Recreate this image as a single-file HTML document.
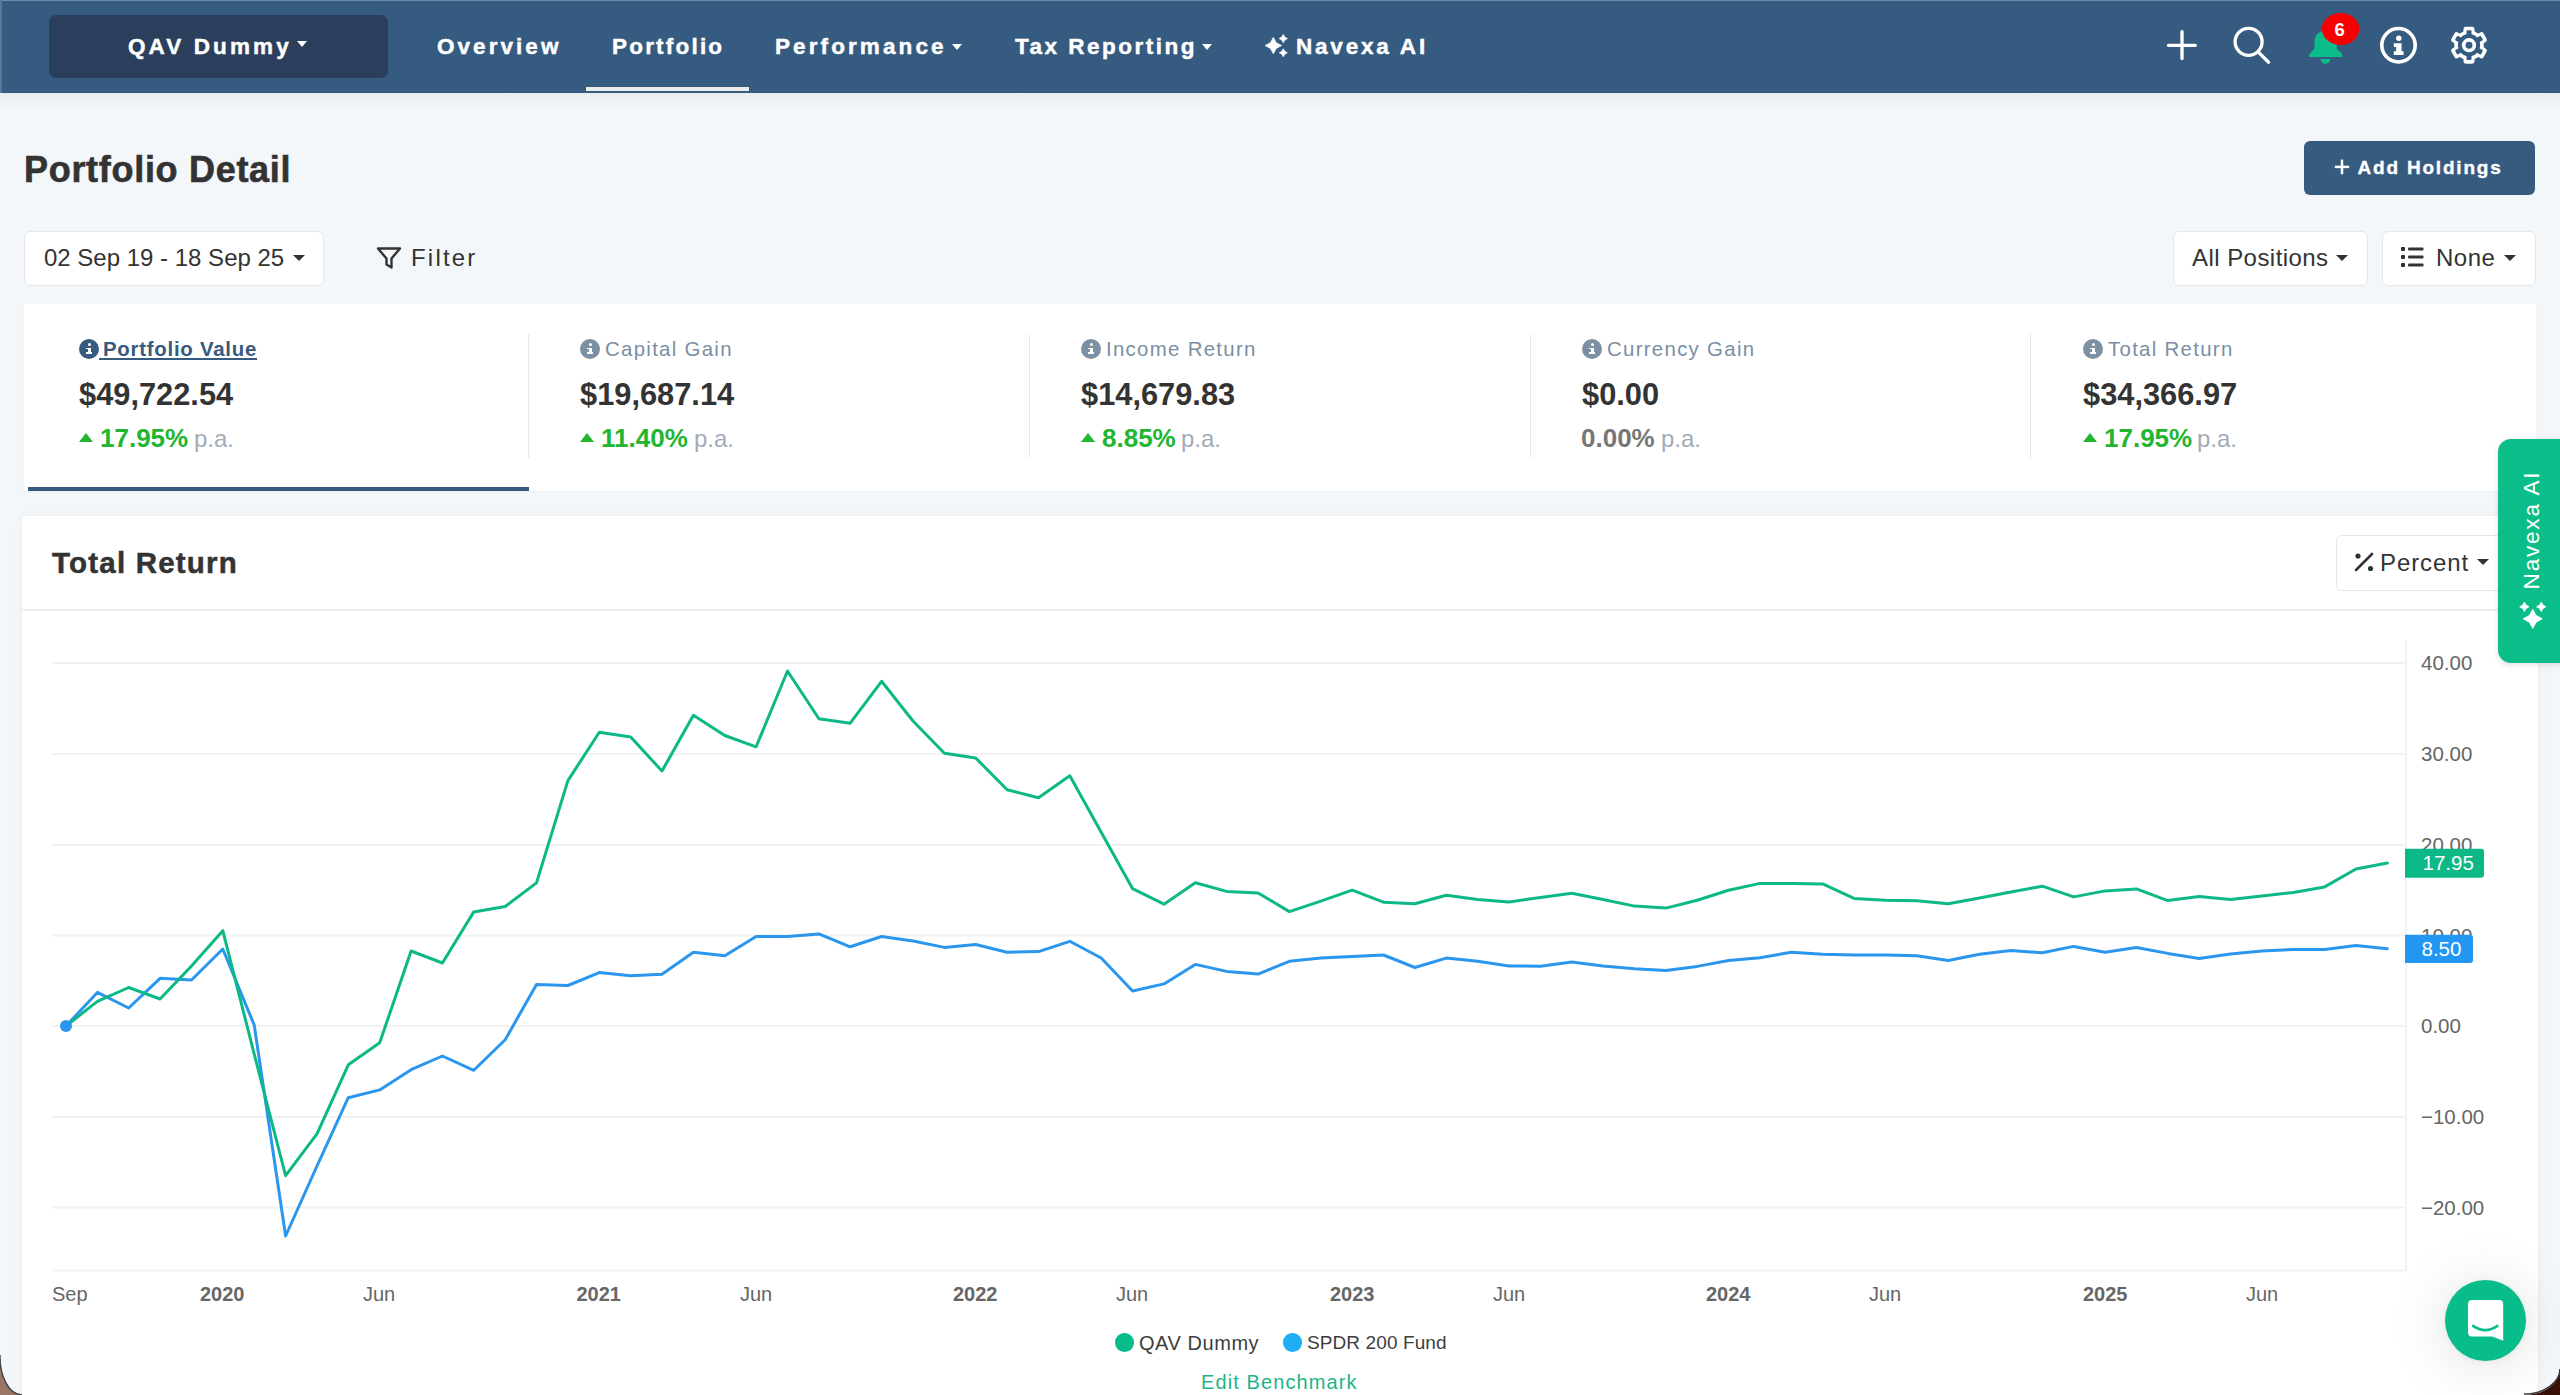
<!DOCTYPE html>
<html><head><meta charset="utf-8">
<style>
html,body{margin:0;padding:0;width:2560px;height:1395px;overflow:hidden;background:#f4f7fa;font-family:"Liberation Sans",sans-serif;}
.a{position:absolute;white-space:nowrap;line-height:1;}
#nav{position:absolute;left:0;top:0;width:2560px;height:93px;background:#365b80;}
.nv{position:absolute;color:#fff;font-weight:bold;font-size:22.5px;line-height:1;white-space:nowrap;-webkit-text-stroke:0.45px #fff;}
.card{position:absolute;background:#fff;}
.lbl{position:absolute;font-size:20.4px;line-height:1;white-space:nowrap;color:#7b8ea3;letter-spacing:1.3px;}
.val{position:absolute;font-size:30.8px;font-weight:bold;line-height:1;white-space:nowrap;color:#333;}
.pct{position:absolute;font-size:26px;font-weight:bold;line-height:1;white-space:nowrap;color:#22b530;}
.pa{position:absolute;font-size:24px;line-height:1;white-space:nowrap;color:#a3abb8;}
.ico{position:absolute;width:20px;height:20px;border-radius:50%;background:#7d8fa3;}
.ico i{position:absolute;left:8.5px;top:4px;width:3px;height:3px;background:#fff;border-radius:50%;}
.ico b{position:absolute;left:8.5px;top:8.5px;width:3px;height:6px;background:#fff;}
.ico u{position:absolute;left:7px;top:13px;width:6px;height:2px;background:#fff;}
.ico s{position:absolute;left:7px;top:8.5px;width:2px;height:1.5px;background:#fff;}
.tri{position:absolute;width:0;height:0;border-left:7px solid transparent;border-right:7px solid transparent;border-bottom:9px solid #22b530;}
.sep{position:absolute;top:334px;width:1px;height:124px;background:#e6e9ed;}
.btn{position:absolute;background:#fff;border:1px solid #e5e7ea;border-radius:6px;box-sizing:border-box;}
.txt{position:absolute;font-size:24px;line-height:1;white-space:nowrap;color:#333;}
.caret{position:absolute;width:0;height:0;border-left:6px solid transparent;border-right:6px solid transparent;border-top:6px solid #333;}
</style></head>
<body>
<!-- window edges -->
<div class="a" style="left:0;top:93px;width:2560px;height:16px;background:linear-gradient(#e9ecef,rgba(244,247,250,0));"></div>
<div id="nav"></div>
<div class="a" style="left:0;top:0;width:2560px;height:1px;background:#7089a4;"></div>
<div class="a" style="left:0;top:0;width:2px;height:93px;background:#5a7795;"></div>

<!-- brand -->
<div class="a" style="left:49px;top:15px;width:339px;height:63px;background:#2b3f5c;border-radius:7px;"></div>
<div class="nv" style="left:128px;top:36px;letter-spacing:3.1px;">QAV Dummy</div>
<div class="caret" style="left:297px;top:41px;border-left-width:5.8px;border-right-width:5.8px;border-top:6.5px solid #fff;"></div>

<div class="nv" style="left:437px;top:36px;letter-spacing:3.05px;">Overview</div>
<div class="nv" style="left:612px;top:36px;letter-spacing:2.2px;">Portfolio</div>
<div class="a" style="left:586px;top:87px;width:163px;height:4px;background:#ececec;"></div>
<div class="nv" style="left:775px;top:36px;letter-spacing:3.1px;">Performance</div>
<div class="caret" style="left:952px;top:44px;border-left-width:5.5px;border-right-width:5.5px;border-top:6px solid #fff;"></div>
<div class="nv" style="left:1015px;top:36px;letter-spacing:2.5px;">Tax Reporting</div>
<div class="caret" style="left:1202px;top:44px;border-left-width:5.5px;border-right-width:5.5px;border-top:6px solid #fff;"></div>
<svg class="a" style="left:1258px;top:28px;" width="40" height="36" viewBox="1258 28 40 36">
  <path fill="#fff" stroke="#fff" stroke-width="0.7" stroke-linejoin="round" d="M1273.35 37.35 L1276.25 42.65 L1281.55 45.55 L1276.25 48.45 L1273.35 53.75 L1270.45 48.45 L1265.15 45.55 L1270.45 42.65Z M1283.30 34.50 L1284.80 37.10 L1287.40 38.60 L1284.80 40.10 L1283.30 42.70 L1281.80 40.10 L1279.20 38.60 L1281.80 37.10Z M1283.30 48.80 L1284.80 51.30 L1287.30 52.80 L1284.80 54.30 L1283.30 56.80 L1281.80 54.30 L1279.30 52.80 L1281.80 51.30Z"/>
</svg>
<div class="nv" style="left:1296px;top:36px;letter-spacing:2.8px;">Navexa AI</div>

<!-- right nav icons -->
<svg class="a" style="left:2150px;top:0;" width="360" height="80" viewBox="2150 0 360 80">
  <g stroke="#fff" stroke-width="3.3" stroke-linecap="round" fill="none">
    <line x1="2182" y1="31.6" x2="2182" y2="58.6"/>
    <line x1="2168.5" y1="45.3" x2="2195.3" y2="45.3"/>
    <circle cx="2248.6" cy="41.8" r="13.5"/>
    <line x1="2258.6" y1="52.4" x2="2268.6" y2="62.2"/>
    <circle cx="2398.5" cy="45.25" r="16.7" stroke-width="3.6"/>
    
  </g>
  <g fill="#fff"><circle cx="2469" cy="45.2" r="14.8"/><rect x="2463.5" y="26.700000000000003" width="11" height="9" rx="2.4" transform="rotate(0 2469 45.2)"/><rect x="2463.5" y="26.700000000000003" width="11" height="9" rx="2.4" transform="rotate(60 2469 45.2)"/><rect x="2463.5" y="26.700000000000003" width="11" height="9" rx="2.4" transform="rotate(120 2469 45.2)"/><rect x="2463.5" y="26.700000000000003" width="11" height="9" rx="2.4" transform="rotate(180 2469 45.2)"/><rect x="2463.5" y="26.700000000000003" width="11" height="9" rx="2.4" transform="rotate(240 2469 45.2)"/><rect x="2463.5" y="26.700000000000003" width="11" height="9" rx="2.4" transform="rotate(300 2469 45.2)"/></g><g fill="#365b80"><circle cx="2469" cy="45.2" r="11.1"/><rect x="2466.5" y="30.300000000000004" width="5" height="8" rx="1" transform="rotate(0 2469 45.2)"/><rect x="2466.5" y="30.300000000000004" width="5" height="8" rx="1" transform="rotate(60 2469 45.2)"/><rect x="2466.5" y="30.300000000000004" width="5" height="8" rx="1" transform="rotate(120 2469 45.2)"/><rect x="2466.5" y="30.300000000000004" width="5" height="8" rx="1" transform="rotate(180 2469 45.2)"/><rect x="2466.5" y="30.300000000000004" width="5" height="8" rx="1" transform="rotate(240 2469 45.2)"/><rect x="2466.5" y="30.300000000000004" width="5" height="8" rx="1" transform="rotate(300 2469 45.2)"/></g><circle cx="2469" cy="45.2" r="5.3" fill="none" stroke="#fff" stroke-width="3.7"/>
  <g fill="#fff">
    <circle cx="2398.8" cy="38.3" r="2.7"/>
    <path d="M2393.8 43.3 h7.8 v8 h2 v3.7 h-9.8 v-3.7 h2.3 v-4.3 h-2.3z"/>
  </g>
  <!-- bell -->
  <path fill="#0bbd8a" d="M2325.5 30.5 c-6.5 0 -11 5 -11 11.5 v6.5 l-4.3 4.5 c-0.8 0.9 -1.2 1.8 -1.2 2.8 v1.2 h33.2 v-1.2 c0 -1 -0.4 -1.9 -1.2 -2.8 l-4.3 -4.5 v-6.5 c0 -6.5 -4.5 -11.5 -11.2 -11.5z"/>
  <path fill="#0bbd8a" d="M2320.7 58.9 h9.4 a4.7 5 0 0 1 -9.4 0z"/>
  <ellipse cx="2340.6" cy="29" rx="18.75" ry="16" fill="#f80000"/>
  <text x="2339.6" y="35.9" fill="#fff" font-family="Liberation Sans" font-weight="bold" font-size="18.5" text-anchor="middle">6</text>
</svg>

<!-- header -->
<div class="a" style="left:24px;top:151.8px;font-size:36px;font-weight:bold;color:#333;letter-spacing:0.7px;-webkit-text-stroke:0.6px #333;">Portfolio Detail</div>
<div class="a" style="left:2304px;top:141px;width:231px;height:54px;background:#375a7f;border-radius:6px;"></div>
<svg class="a" style="left:2330px;top:155px;" width="24" height="24" viewBox="2330 155 24 24"><g stroke="#fff" stroke-width="2.5"><line x1="2342" y1="159.6" x2="2342" y2="174.2"/><line x1="2334.8" y1="166.9" x2="2349.2" y2="166.9"/></g></svg>
<div class="a" style="left:2357.5px;top:158px;font-size:19px;font-weight:bold;color:#fff;letter-spacing:1.8px;-webkit-text-stroke:0.35px #fff;">Add Holdings</div>

<!-- controls -->
<div class="btn" style="left:24px;top:231px;width:300px;height:55px;"></div>
<div class="txt" style="left:44px;top:245.6px;">02 Sep 19 - 18 Sep 25</div>
<div class="caret" style="left:292.5px;top:255px;"></div>
<svg class="a" style="left:376px;top:245.6px;" width="26" height="24" viewBox="0 0 26 24">
  <path d="M2 2.5 h22 l-8.5 10 v9 l-5 -3 v-6z" fill="none" stroke="#333" stroke-width="2.4" stroke-linejoin="round"/>
</svg>
<div class="txt" style="left:411px;top:245.6px;letter-spacing:2.2px;">Filter</div>

<div class="btn" style="left:2173px;top:231px;width:195px;height:55px;"></div>
<div class="txt" style="left:2192px;top:245.6px;letter-spacing:0.45px;">All Positions</div>
<div class="caret" style="left:2336px;top:255px;"></div>
<div class="btn" style="left:2382px;top:231px;width:154px;height:55px;"></div>
<svg class="a" style="left:2400px;top:246px;" width="25" height="22" viewBox="0 0 25 22">
  <g fill="#333"><rect x="1" y="1" width="4" height="4" rx="0.8"/><rect x="1" y="9" width="4" height="4" rx="0.8"/><rect x="1" y="17" width="4" height="4" rx="0.8"/>
  <rect x="8" y="1.5" width="15.5" height="3" rx="1"/><rect x="8" y="9.5" width="15.5" height="3" rx="1"/><rect x="8" y="17.5" width="15.5" height="3" rx="1"/></g>
</svg>
<div class="txt" style="left:2436px;top:245.6px;letter-spacing:0.5px;">None</div>
<div class="caret" style="left:2504px;top:255px;"></div>

<!-- stats card -->
<div class="card" style="left:24px;top:304px;width:2512px;height:187px;box-shadow:0 1px 2px rgba(0,0,0,0.04);"></div>
<div class="a" style="left:28px;top:487px;width:501px;height:4px;background:#375a7f;"></div>
<div class="sep" style="left:528px;"></div>
<div class="sep" style="left:1029px;"></div>
<div class="sep" style="left:1530px;"></div>
<div class="sep" style="left:2030px;"></div>

<div class="ico" style="left:79px;top:339px;background:#375a7f;"><i></i><b></b><u></u><s></s></div>
<div class="lbl" style="left:103px;top:339px;color:#375a7f;font-weight:bold;letter-spacing:0.75px;text-decoration:underline;text-decoration-thickness:2px;text-underline-offset:2px;">Portfolio Value</div>
<div class="a" style="left:99px;top:357.5px;width:5px;height:2px;background:#375a7f;"></div>
<div class="val" style="left:79px;top:379.8px;">$49,722.54</div>
<div class="tri" style="left:79px;top:433px;"></div>
<div class="pct" style="left:100px;top:424.8px;">17.95%</div>
<div class="pa" style="left:194px;top:426.5px;">p.a.</div>

<div class="ico" style="left:580px;top:339px;"><i></i><b></b><u></u><s></s></div>
<div class="lbl" style="left:605px;top:339px;">Capital Gain</div>
<div class="val" style="left:580px;top:379.8px;">$19,687.14</div>
<div class="tri" style="left:580px;top:433px;"></div>
<div class="pct" style="left:601px;top:424.8px;">11.40%</div>
<div class="pa" style="left:694px;top:426.5px;">p.a.</div>

<div class="ico" style="left:1081px;top:339px;"><i></i><b></b><u></u><s></s></div>
<div class="lbl" style="left:1106px;top:339px;">Income Return</div>
<div class="val" style="left:1081px;top:379.8px;">$14,679.83</div>
<div class="tri" style="left:1081px;top:433px;"></div>
<div class="pct" style="left:1102px;top:424.8px;">8.85%</div>
<div class="pa" style="left:1181px;top:426.5px;">p.a.</div>

<div class="ico" style="left:1582px;top:339px;"><i></i><b></b><u></u><s></s></div>
<div class="lbl" style="left:1607px;top:339px;">Currency Gain</div>
<div class="val" style="left:1582px;top:379.8px;">$0.00</div>
<div class="pct" style="left:1581px;top:424.8px;color:#777;">0.00%</div>
<div class="pa" style="left:1661px;top:426.5px;">p.a.</div>

<div class="ico" style="left:2083px;top:339px;"><i></i><b></b><u></u><s></s></div>
<div class="lbl" style="left:2108px;top:339px;">Total Return</div>
<div class="val" style="left:2083px;top:379.8px;">$34,366.97</div>
<div class="tri" style="left:2083px;top:433px;"></div>
<div class="pct" style="left:2104px;top:424.8px;">17.95%</div>
<div class="pa" style="left:2197px;top:426.5px;">p.a.</div>

<!-- CHART -->
<div class="card" style="left:22px;top:516px;width:2516px;height:900px;box-shadow:0 0 0 1px #edf0f3,0 0 10px rgba(0,20,40,0.04);"></div>
<div class="a" style="left:22px;top:608.5px;width:2516px;height:2px;background:#eceef0;"></div>
<div class="a" style="left:52px;top:548.2px;font-size:29.5px;font-weight:bold;color:#333;letter-spacing:1.2px;-webkit-text-stroke:0.5px #333;">Total Return</div>
<div class="btn" style="left:2336px;top:535px;width:200px;height:56px;"></div>
<svg class="a" style="left:2353px;top:551px;" width="22" height="22" viewBox="0 0 22 22">
  <line x1="3" y1="19" x2="19" y2="3" stroke="#333" stroke-width="2.6" stroke-linecap="round"/>
  <circle cx="5" cy="5" r="2.6" fill="#333"/><circle cx="17.5" cy="17.5" r="2.6" fill="#333"/>
</svg>
<div class="txt" style="left:2380px;top:550.5px;letter-spacing:0.9px;">Percent</div>
<div class="caret" style="left:2476.5px;top:558.5px;"></div>
<svg class="a" style="left:0;top:0;" width="2560" height="1395" viewBox="0 0 2560 1395">
<line x1="52" y1="663" x2="2405" y2="663" stroke="#f2f2f2" stroke-width="2"/>
<line x1="52" y1="754" x2="2405" y2="754" stroke="#f2f2f2" stroke-width="2"/>
<line x1="52" y1="845" x2="2405" y2="845" stroke="#f2f2f2" stroke-width="2"/>
<line x1="52" y1="935.5" x2="2405" y2="935.5" stroke="#f2f2f2" stroke-width="2"/>
<line x1="52" y1="1026" x2="2405" y2="1026" stroke="#f2f2f2" stroke-width="2"/>
<line x1="52" y1="1117" x2="2405" y2="1117" stroke="#f2f2f2" stroke-width="2"/>
<line x1="52" y1="1207.5" x2="2405" y2="1207.5" stroke="#f2f2f2" stroke-width="2"/>
<line x1="52" y1="1270.5" x2="2405" y2="1270.5" stroke="#f2f2f2" stroke-width="2"/>
<line x1="2406" y1="640" x2="2406" y2="1271" stroke="#f3f3f3" stroke-width="2"/>
<text x="2421" y="670.3" font-family="Liberation Sans" font-size="20.5" fill="#666">40.00</text>
<text x="2421" y="761.3" font-family="Liberation Sans" font-size="20.5" fill="#666">30.00</text>
<text x="2421" y="852.3" font-family="Liberation Sans" font-size="20.5" fill="#666">20.00</text>
<text x="2421" y="942.8" font-family="Liberation Sans" font-size="20.5" fill="#666">10.00</text>
<text x="2421" y="1033.3" font-family="Liberation Sans" font-size="20.5" fill="#666">0.00</text>
<text x="2421" y="1124.3" font-family="Liberation Sans" font-size="20.5" fill="#666">−10.00</text>
<text x="2421" y="1214.8" font-family="Liberation Sans" font-size="20.5" fill="#666">−20.00</text>
<text x="52" y="1301" font-family="Liberation Sans" font-size="20" fill="#666">Sep</text>
<text x="200" y="1301" font-family="Liberation Sans" font-size="20" font-weight="bold" fill="#666">2020</text>
<text x="363" y="1301" font-family="Liberation Sans" font-size="20" fill="#666">Jun</text>
<text x="576.5" y="1301" font-family="Liberation Sans" font-size="20" font-weight="bold" fill="#666">2021</text>
<text x="740" y="1301" font-family="Liberation Sans" font-size="20" fill="#666">Jun</text>
<text x="953" y="1301" font-family="Liberation Sans" font-size="20" font-weight="bold" fill="#666">2022</text>
<text x="1116" y="1301" font-family="Liberation Sans" font-size="20" fill="#666">Jun</text>
<text x="1330" y="1301" font-family="Liberation Sans" font-size="20" font-weight="bold" fill="#666">2023</text>
<text x="1493" y="1301" font-family="Liberation Sans" font-size="20" fill="#666">Jun</text>
<text x="1706" y="1301" font-family="Liberation Sans" font-size="20" font-weight="bold" fill="#666">2024</text>
<text x="1869" y="1301" font-family="Liberation Sans" font-size="20" fill="#666">Jun</text>
<text x="2083" y="1301" font-family="Liberation Sans" font-size="20" font-weight="bold" fill="#666">2025</text>
<text x="2246" y="1301" font-family="Liberation Sans" font-size="20" fill="#666">Jun</text>
<polyline points="66.0,1026.0 97.4,992.4 128.7,1008.0 160.1,978.3 191.5,980.0 222.8,949.0 254.2,1025.0 285.6,1236.0 317.0,1166.0 348.3,1097.7 379.7,1089.9 411.1,1069.7 442.4,1056.0 473.8,1070.3 505.2,1039.7 536.5,984.5 567.9,985.5 599.3,972.6 630.7,975.8 662.0,974.2 693.4,952.3 724.8,955.8 756.1,936.5 787.5,936.5 818.9,933.9 850.2,946.8 881.6,936.5 913.0,941.0 944.4,947.4 975.7,944.5 1007.1,952.3 1038.5,951.6 1069.8,941.3 1101.2,958.0 1132.6,991.0 1164.0,983.9 1195.3,964.4 1226.7,971.4 1258.1,974.1 1289.4,961.3 1320.8,958.1 1352.2,956.6 1383.5,955.0 1414.9,967.5 1446.3,958.1 1477.7,961.3 1509.0,965.9 1540.4,966.3 1571.8,962.0 1603.1,965.9 1634.5,968.8 1665.9,970.6 1697.2,966.4 1728.6,960.5 1760.0,957.8 1791.4,952.2 1822.7,954.2 1854.1,955.0 1885.5,955.0 1916.8,955.8 1948.2,960.5 1979.6,954.2 2010.9,950.6 2042.3,952.7 2073.7,946.4 2105.1,952.2 2136.4,947.5 2167.8,953.4 2199.2,958.4 2230.5,953.9 2261.9,951.1 2293.3,949.5 2324.6,949.6 2356.0,945.5 2387.4,948.7" fill="none" stroke="#2b96ee" stroke-width="3" stroke-linejoin="round" stroke-linecap="round"/>
<polyline points="66.0,1026.0 97.4,1001.4 128.7,987.5 160.1,999.0 191.5,966.0 222.8,930.7 254.2,1054.0 285.6,1175.7 317.0,1133.8 348.3,1064.8 379.7,1042.8 411.1,951.0 442.4,963.0 473.8,911.9 505.2,906.5 536.5,882.9 567.9,780.6 599.3,732.3 630.7,737.1 662.0,771.0 693.4,715.2 724.8,735.5 756.1,746.8 787.5,671.0 818.9,718.7 850.2,723.2 881.6,681.3 913.0,721.0 944.4,753.2 975.7,758.0 1007.1,789.7 1038.5,797.7 1069.8,775.8 1101.2,832.3 1132.6,888.7 1164.0,904.2 1195.3,882.8 1226.7,891.4 1258.1,893.0 1289.4,911.6 1320.8,901.1 1352.2,890.2 1383.5,902.2 1414.9,903.8 1446.3,895.3 1477.7,899.5 1509.0,901.9 1540.4,897.5 1571.8,893.3 1603.1,899.5 1634.5,906.1 1665.9,908.1 1697.2,900.3 1728.6,890.2 1760.0,883.4 1791.4,883.4 1822.7,883.9 1854.1,898.4 1885.5,900.3 1916.8,900.8 1948.2,903.8 1979.6,898.0 2010.9,892.0 2042.3,886.2 2073.7,896.9 2105.1,890.9 2136.4,888.9 2167.8,900.6 2199.2,896.4 2230.5,899.5 2261.9,895.9 2293.3,892.5 2324.6,886.9 2356.0,869.0 2387.4,863.0" fill="none" stroke="#0cb986" stroke-width="3" stroke-linejoin="round" stroke-linecap="round"/>
<circle cx="66" cy="1026" r="6" fill="#2b96ee"/>
<path d="M2405 848.7 h76 a3 3 0 0 1 3 3 v23 a3 3 0 0 1 -3 3 h-76z" fill="#0cb986"/>
<text x="2422.5" y="870" font-family="Liberation Sans" font-size="20.5" fill="#fff">17.95</text>
<path d="M2405 934.8 h65 a3 3 0 0 1 3 3 v22.2 a3 3 0 0 1 -3 3 h-65z" fill="#2196f3"/>
<text x="2421.5" y="956" font-family="Liberation Sans" font-size="20.5" fill="#fff">8.50</text>
</svg>
<!-- legend -->
<div class="a" style="left:1115px;top:1333px;width:18.5px;height:18.5px;border-radius:50%;background:#07bb8a;"></div>
<div class="a" style="left:1139px;top:1332.8px;font-size:20px;color:#3d3d3d;letter-spacing:0.55px;">QAV Dummy</div>
<div class="a" style="left:1283px;top:1333px;width:18.5px;height:18.5px;border-radius:50%;background:#1fadf5;"></div>
<div class="a" style="left:1307px;top:1332.8px;font-size:19px;color:#3d3d3d;letter-spacing:0.1px;">SPDR 200 Fund</div>
<div class="a" style="left:1201px;top:1372.4px;font-size:20px;color:#1db588;letter-spacing:1.1px;">Edit Benchmark</div>
<!-- navexa tab -->
<div class="a" style="left:2498px;top:438.5px;width:70px;height:224px;background:#0bbd89;border-radius:13px 0 0 13px;box-shadow:0 2px 6px rgba(0,0,0,0.12);"></div>
<div class="a" style="left:2532px;top:530px;transform:translate(-50%,-50%) rotate(-90deg);font-size:22.5px;color:#fff;letter-spacing:1.8px;">Navexa AI</div>
<svg class="a" style="left:2510px;top:590px;" width="46" height="46" viewBox="2510 590 46 46">
  <path fill="#fff" stroke="#fff" stroke-width="0.8" stroke-linejoin="round" d="M2532.75 609.20 L2536.15 615.40 L2542.35 618.80 L2536.15 622.20 L2532.75 628.40 L2529.35 622.20 L2523.15 618.80 L2529.35 615.40Z M2524.40 602.10 L2526.10 605.10 L2529.10 606.80 L2526.10 608.50 L2524.40 611.50 L2522.70 608.50 L2519.70 606.80 L2522.70 605.10Z M2541.30 602.10 L2543.00 605.10 L2546.00 606.80 L2543.00 608.50 L2541.30 611.50 L2539.60 608.50 L2536.60 606.80 L2539.60 605.10Z"/>
</svg>
<!-- intercom -->
<div class="a" style="left:2445px;top:1280px;width:81px;height:81px;border-radius:50%;background:#08bd8a;box-shadow:0 1px 6px rgba(0,0,0,0.06),0 4px 60px rgba(0,0,0,0.13);"></div>
<svg class="a" style="left:2455px;top:1290px;" width="60" height="60" viewBox="2455 1290 60 60">
  <path fill="#fff" d="M2472 1300.1 h27.2 a4 4 0 0 1 4 4 v36.65 l-10.8 -4.25 h-20.4 a4 4 0 0 1 -4 -4 v-28.4 a4 4 0 0 1 4 -4z"/>
  <path fill="none" stroke="#08bd8a" stroke-width="2.6" stroke-linecap="round" d="M2473.2 1325.9 q12.1 8.4 24.2 0"/>
</svg>
<!-- window corners -->
<svg class="a" style="left:0;top:1355px;" width="40" height="40" viewBox="0 0 40 40"><path d="M0 0 v40 h22 A22 38 0 0 1 0 0z" fill="#9c7766"/><path d="M0 0 A22 38 0 0 0 22 40" fill="none" stroke="#444" stroke-width="1.5"/></svg>
<svg class="a" style="left:2520px;top:1355px;" width="40" height="40" viewBox="0 0 40 40"><path d="M40 14 v26 h-36 A36 25 0 0 0 40 14z" fill="#3a0f08"/><path d="M40 14 A36 25 0 0 1 4 39" fill="none" stroke="#333" stroke-width="1.5"/></svg>
</body></html>
